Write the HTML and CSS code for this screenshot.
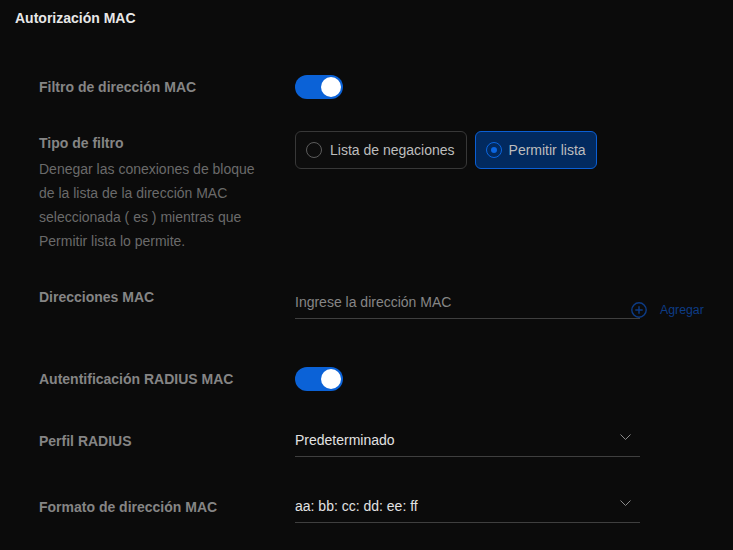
FILE: index.html
```html
<!DOCTYPE html>
<html lang="es">
<head>
<meta charset="utf-8">
<title>Autorización MAC</title>
<link rel="stylesheet" href="styles.css">
</head>
<body>
<div class="page">
  <h1 class="title">Autorización MAC</h1>
  <div class="form">
    <div class="row row-filter">
      <div class="label">Filtro de dirección MAC</div>
      <div class="value"><span class="toggle on"><span class="knob"></span></span></div>
    </div>

    <div class="row row-type">
      <div class="label-col">
        <div class="label">Tipo de filtro</div>
        <p class="desc">Denegar las conexiones de bloque de la lista de la dirección MAC seleccionada ( es ) mientras que Permitir lista lo permite.</p>
      </div>
      <div class="value radios">
        <div class="radio-box"><span class="radio"></span><span class="radio-text">Lista de negaciones</span></div>
        <div class="radio-box checked"><span class="radio"><span class="dot"></span></span><span class="radio-text">Permitir lista</span></div>
      </div>
    </div>

    <div class="row row-mac">
      <div class="label">Direcciones MAC</div>
      <div class="value mac-field">
        <div class="input"><span class="placeholder">Ingrese la dirección MAC</span></div>
        <div class="add">
          <svg class="add-icon" width="16" height="16" viewBox="0 0 16 16"><circle cx="8" cy="8" r="7.2" fill="none" stroke="#0d3c86" stroke-width="1.4"/><path d="M8 4.3v7.4M4.3 8h7.4" stroke="#0d3c86" stroke-width="1.4"/></svg>
          <span class="add-text">Agregar</span>
        </div>
      </div>
    </div>

    <div class="row row-radius">
      <div class="label">Autentificación RADIUS MAC</div>
      <div class="value"><span class="toggle on"><span class="knob"></span></span></div>
    </div>

    <div class="row row-select">
      <div class="label label-select">Perfil RADIUS</div>
      <div class="value">
        <div class="select"><span class="select-text">Predeterminado</span>
          <svg class="chev" width="11" height="6" viewBox="0 0 11 6"><path d="M0.5 0.5l5 5 5-5" fill="none" stroke="#8a8a8a" stroke-width="1"/></svg>
        </div>
      </div>
    </div>

    <div class="row row-select">
      <div class="label label-select">Formato de dirección MAC</div>
      <div class="value">
        <div class="select"><span class="select-text">aa: bb: cc: dd: ee: ff</span>
          <svg class="chev" width="11" height="6" viewBox="0 0 11 6"><path d="M0.5 0.5l5 5 5-5" fill="none" stroke="#8a8a8a" stroke-width="1"/></svg>
        </div>
      </div>
    </div>
  </div>
</div>
</body>
</html>
```
FILE: styles.css
```css
html, body {
  margin: 0;
  padding: 0;
  background: #0b0b0b;
}
body {
  font-family: "Liberation Sans", Arial, sans-serif;
  width: 733px;
  height: 550px;
  overflow: hidden;
}
.page {
  padding: 10px 15px 0 15px;
}
.title {
  margin: 0;
  font-size: 14px;
  line-height: 16px;
  font-weight: 700;
  color: #e8e8e8;
}
.form {
  padding-left: 24px;
}
.row {
  display: grid;
  grid-template-columns: 256px 1fr;
  align-items: start;
}
.label {
  font-size: 14px;
  font-weight: 700;
  line-height: 24px;
  color: #858585;
}
.row-filter { margin-top: 49px; }
.row-type { margin-top: 32px; }
.row-mac { margin-top: 32px; }
.row-radius { margin-top: 48px; }
.row-select { margin-top: 33px; }

.desc {
  margin: 2px 0 0 0;
  width: 220px;
  font-size: 14px;
  line-height: 24px;
  color: #6a6a6a;
}

.toggle {
  display: flex;
  justify-content: flex-end;
  align-items: center;
  box-sizing: border-box;
  width: 48px;
  height: 24px;
  padding: 2px;
  border-radius: 12px;
  background: #0b62d7;
}
.knob {
  width: 20px;
  height: 20px;
  border-radius: 50%;
  background: #ffffff;
}

.radios {
  display: flex;
  gap: 8px;
}
.radio-box {
  display: flex;
  align-items: center;
  gap: 8px;
  height: 38px;
  box-sizing: border-box;
  padding: 0 11px 0 10px;
  border: 1px solid #383838;
  border-radius: 6px;
  background: #0d0d0d;
}
.radio {
  display: flex;
  align-items: center;
  justify-content: center;
  box-sizing: border-box;
  width: 16px;
  height: 16px;
  border-radius: 50%;
  border: 1px solid #5c5c5c;
}
.radio-text {
  font-size: 14px;
  color: #bdbdbd;
}
.radio-box.checked {
  gap: 7px;
  padding-right: 10px;
  background: #022a5f;
  border-color: #0b5fd4;
}
.radio-box.checked .radio {
  border: 1.5px solid #0b66e0;
}
.dot {
  width: 6px;
  height: 6px;
  border-radius: 50%;
  background: #0b66e0;
}

.mac-field {
  display: flex;
  align-items: flex-start;
}
.input {
  box-sizing: border-box;
  width: 345px;
  height: 34px;
  border-bottom: 1px solid #3f3f3f;
  display: flex;
  align-items: center;
}
.placeholder {
  font-size: 14px;
  color: #868686;
}
.add {
  display: flex;
  align-items: center;
  gap: 13px;
  margin-left: -9px;
  margin-top: 17px;
  height: 16px;
}
.add-icon {
  display: block;
}
.add-text {
  font-size: 12.3px;
  color: #0d3c86;
}

.label-select {
  line-height: 32px;
  padding-top: 1px;
}
.select {
  box-sizing: border-box;
  width: 345px;
  height: 33px;
  border-bottom: 1px solid #3f3f3f;
  display: flex;
  align-items: center;
  justify-content: space-between;
  padding-right: 9px;
}
.select-text {
  font-size: 14px;
  color: #e2e2e2;
}
.chev {
  display: block;
  margin-top: -6px;
}
```
